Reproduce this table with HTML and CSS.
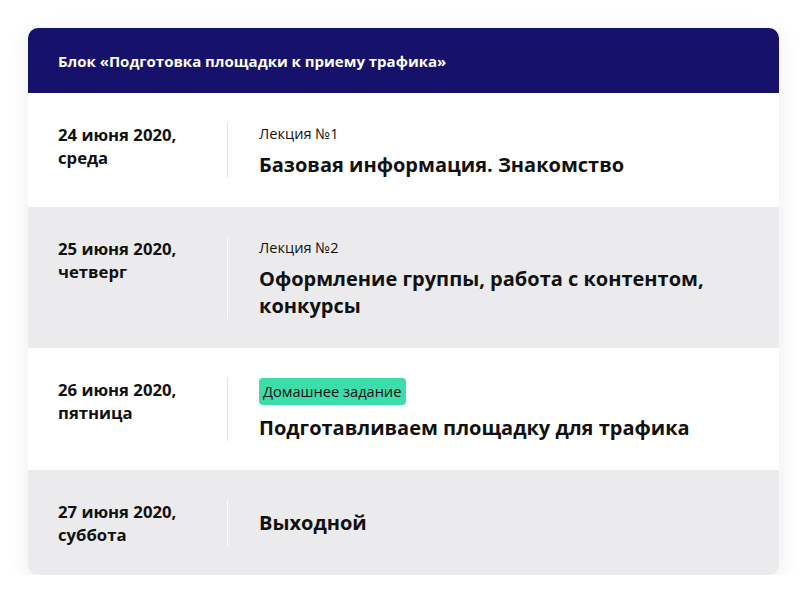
FILE: index.html
```html
<!DOCTYPE html>
<html lang="ru">
<head>
<meta charset="utf-8">
<link rel="stylesheet" href="styles.css">
</head>
<body>
<div class="card">
  <div class="head">Блок «Подготовка площадки к приему трафика»</div>
  <div class="row">
    <div class="date">24 июня 2020,<br>среда</div>
    <div class="info">
      <div class="label">Лекция №1</div>
      <div class="title">Базовая информация. Знакомство</div>
    </div>
  </div>
  <div class="row alt">
    <div class="date">25 июня 2020,<br>четверг</div>
    <div class="info">
      <div class="label">Лекция №2</div>
      <div class="title two">Оформление группы, работа с контентом,<br>конкурсы</div>
    </div>
  </div>
  <div class="row">
    <div class="date">26 июня 2020,<br>пятница</div>
    <div class="info">
      <div class="label badge-wrap"><span class="badge">Домашнее задание</span></div>
      <div class="title">Подготавливаем площадку для трафика</div>
    </div>
  </div>
  <div class="row alt">
    <div class="date">27 июня 2020,<br>суббота</div>
    <div class="info center">
      <div class="title">Выходной</div>
    </div>
  </div>
</div>
</body>
</html>
```
FILE: styles.css
```css
* { box-sizing: border-box; }
html, body { margin: 0; padding: 0; background: #ffffff; }
body { padding: 28px 28px 0 28px; font-family: "Open Sans", "Noto Sans", sans-serif; color: #111; }
.card {
  width: 751px;
  border-radius: 10px;
  overflow: hidden;
  background: #fff;
  box-shadow: 0 6px 24px rgba(30, 30, 60, 0.08);
}
.head {
  background: #16116b;
  color: #fff;
  height: 65px;
  padding: 0 30px;
  display: flex;
  align-items: center;
  font-weight: 700;
  font-size: 15px;
}
.row {
  display: flex;
  padding: 30px 0 29px 30px;
  background: #fff;
}
.row.alt { background: #ebebed; }
.date {
  width: 170px;
  flex: none;
  font-weight: 700;
  font-size: 16.7px;
  line-height: 23px;
  border-right: 1px solid #e2e2e6;
}
.row.alt .date { border-right-color: #fff; }
.info {
  padding-left: 31px;
  display: flex;
  flex-direction: column;
}
.info.center { justify-content: center; }
.label { font-size: 14.6px; line-height: 20px; margin-bottom: 9px; }
.badge-wrap { margin-bottom: 10px; }
.badge {
  display: inline-block;
  background: #3ddcab;
  border-radius: 4px;
  padding: 3px 5px 4px 4px;
  line-height: 20px;
}
.title { font-size: 20px; font-weight: 700; line-height: 26px; }
.title.two { line-height: 26.5px; }
```
